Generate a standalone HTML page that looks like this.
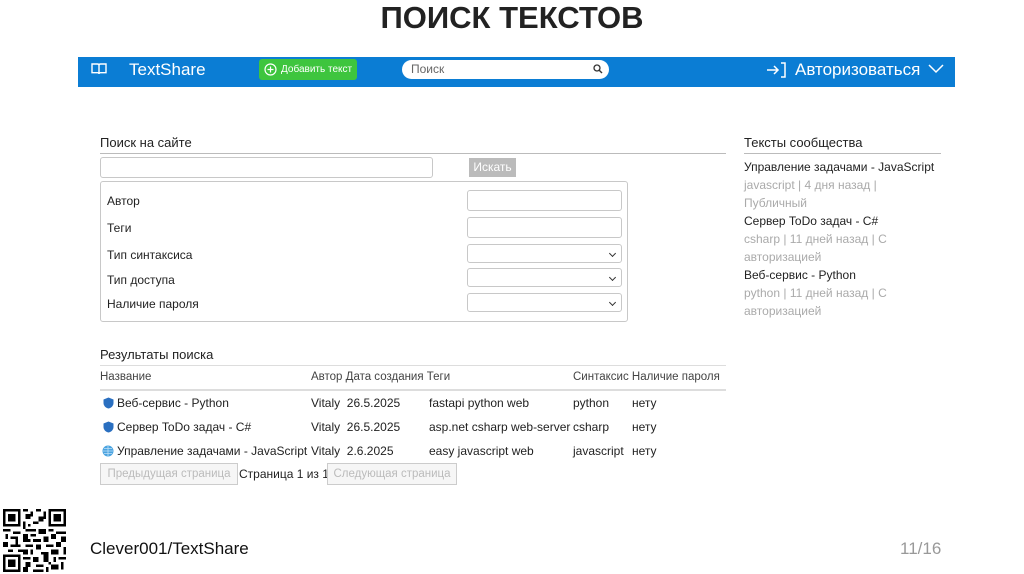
<!DOCTYPE html>
<html><head><meta charset="utf-8"><style>
*{margin:0;padding:0;box-sizing:border-box}
body{width:1024px;height:574px;background:#fff;position:relative;overflow:hidden;font-family:"Liberation Sans","DejaVu Sans",sans-serif;color:#222}
.a{position:absolute;white-space:nowrap}
.t{font-size:12px}
.g{color:#aaa}
.inp{position:absolute;border:1px solid #c8c8c8;border-radius:3px;background:#fff}
.sel:after{content:"";position:absolute;right:6px;top:6px;width:4px;height:4px;border-right:1.5px solid #333;border-bottom:1.5px solid #333;transform:rotate(45deg)}
.btn{position:absolute;border:1px solid #ccc;color:#bbb;font-size:11.5px;background:#f6f6f6;padding:4px 0 0 0;text-align:center;white-space:nowrap;overflow:hidden}
</style></head><body>
<div class="a" style="left:0;width:1024px;top:0;text-align:center;font-size:31px;font-weight:bold;line-height:36px">ПОИСК ТЕКСТОВ</div>

<div class="a" style="left:78px;top:57px;width:877px;height:30px;background:#0b7dd4"></div>
<svg class="a" style="left:91px;top:62px" width="16" height="14" viewBox="0 0 16 14"><path d="M1 2h5.5c1 0 1.5.6 1.5 1.5V12c0-.8-.6-1.3-1.5-1.3H1zM15 2H9.5C8.5 2 8 2.6 8 3.5V12c0-.8.6-1.3 1.5-1.3H15z" fill="none" stroke="#fff" stroke-width="1.4"/></svg>
<div class="a" style="left:129px;top:60px;color:#fff;font-size:17px">TextShare</div>
<div class="a" style="left:259px;top:59px;width:98px;height:21px;background:#3ec53e;border-radius:3px"></div>
<svg class="a" style="left:264px;top:63px" width="13" height="13"><circle cx="6.5" cy="6.5" r="5.5" fill="none" stroke="#fff" stroke-width="1.2"/><path d="M6.5 3.5v6M3.5 6.5h6" stroke="#fff" stroke-width="1.2"/></svg>
<div class="a" style="left:281px;top:64px;color:#fff;font-size:10px">Добавить текст</div>
<div class="a" style="left:402px;top:60px;width:207px;height:19px;background:#fff;border-radius:10px"></div>
<div class="a" style="left:411px;top:62px;color:#666;font-size:12px">Поиск</div>
<svg class="a" style="left:593px;top:64px" width="10" height="10"><circle cx="4" cy="4" r="3" fill="none" stroke="#333" stroke-width="1.3"/><path d="M6.2 6.2L9 9" stroke="#333" stroke-width="1.4"/></svg>
<svg class="a" style="left:766px;top:61px" width="22" height="18"><path d="M1 9h11M8 5l4 4-4 4" fill="none" stroke="#fff" stroke-width="1.5"/><path d="M15 2h4v14h-4" fill="none" stroke="#fff" stroke-width="1.5"/></svg>
<div class="a" style="left:795px;top:60px;color:#fff;font-size:17px">Авторизоваться</div>
<svg class="a" style="left:928px;top:64px" width="16" height="10"><path d="M1 1l7 7 7-7" fill="none" stroke="#fff" stroke-width="1.5"/></svg>

<div class="a" style="left:100px;top:135px;font-size:13px">Поиск на сайте</div>
<div class="a" style="left:100px;top:153px;width:626px;height:1px;background:#bbb"></div>
<div class="inp" style="left:100px;top:157px;width:333px;height:21px"></div>
<div class="a" style="left:469px;top:158px;width:47px;height:19px;background:#bbb;color:#fff;font-size:12px;text-align:center;line-height:19px">Искать</div>
<div class="inp" style="left:100px;top:181px;width:528px;height:141px"></div>
<div class="a t" style="left:107px;top:194px">Автор</div>
<div class="a t" style="left:107px;top:221px">Теги</div>
<div class="a t" style="left:107px;top:248px">Тип синтаксиса</div>
<div class="a t" style="left:107px;top:273px">Тип доступа</div>
<div class="a t" style="left:107px;top:297px">Наличие пароля</div>
<div class="inp" style="left:467px;top:190px;width:155px;height:21px"></div>
<div class="inp" style="left:467px;top:217px;width:155px;height:21px"></div>
<div class="inp sel" style="left:467px;top:244px;width:155px;height:19px"></div>
<div class="inp sel" style="left:467px;top:268px;width:155px;height:19px"></div>
<div class="inp sel" style="left:467px;top:293px;width:155px;height:19px"></div>

<div class="a" style="left:100px;top:347px;font-size:13px">Результаты поиска</div>
<div class="a" style="left:100px;top:365px;width:626px;height:1px;background:#ddd"></div>
<div class="a t" style="left:100px;top:371px;color:#444;font-size:11.5px">Название</div>
<div class="a t" style="left:311px;top:371px;color:#444;font-size:11.5px">Автор Дата создания Теги</div>
<div class="a t" style="left:573px;top:371px;color:#444;font-size:11.5px">Синтаксис Наличие пароля</div>
<div class="a" style="left:100px;top:389px;width:626px;height:2px;background:#ddd"></div>

<svg class="a" style="left:103px;top:397px" width="11" height="12"><path d="M5.5 0.5L10.5 2.5V6c0 3-2.5 5-5 5.5C3 11 .5 9 .5 6V2.5z" fill="#2a6fc0"/></svg>
<svg class="a" style="left:103px;top:421px" width="11" height="12"><path d="M5.5 0.5L10.5 2.5V6c0 3-2.5 5-5 5.5C3 11 .5 9 .5 6V2.5z" fill="#2a6fc0"/></svg>
<svg class="a" style="left:102px;top:445px" width="12" height="12"><circle cx="6" cy="6" r="5.5" fill="#4aa3e0"/><path d="M1 6h10M6 1v10M2 3.5h8M2 8.5h8" stroke="#bfe0f7" stroke-width=".8"/></svg>
<div class="a t" style="left:117px;top:396px">Веб-сервис - Python</div>
<div class="a t" style="left:117px;top:420px">Сервер ToDo задач - C#</div>
<div class="a t" style="left:117px;top:444px">Управление задачами - JavaScript</div>
<div class="a t" style="left:311px;top:396px">Vitaly&nbsp; 26.5.2025</div>
<div class="a t" style="left:311px;top:420px">Vitaly&nbsp; 26.5.2025</div>
<div class="a t" style="left:311px;top:444px">Vitaly&nbsp; 2.6.2025</div>
<div class="a t" style="left:429px;top:396px">fastapi python web</div>
<div class="a t" style="left:429px;top:420px">asp.net csharp web-server</div>
<div class="a t" style="left:429px;top:444px">easy javascript web</div>
<div class="a t" style="left:573px;top:396px">python</div>
<div class="a t" style="left:573px;top:420px">csharp</div>
<div class="a t" style="left:573px;top:444px">javascript</div>
<div class="a t" style="left:632px;top:396px">нету</div>
<div class="a t" style="left:632px;top:420px">нету</div>
<div class="a t" style="left:632px;top:444px">нету</div>
<div class="btn" style="left:100px;top:463px;width:138px;height:22px">Предыдущая страница</div>
<div class="a t" style="left:239px;top:467px">Страница 1 из 1</div>
<div class="btn" style="left:327px;top:463px;width:130px;height:22px">Следующая страница</div>

<div class="a" style="left:744px;top:135px;font-size:13px">Тексты сообщества</div>
<div class="a" style="left:744px;top:153px;width:197px;height:1px;background:#bbb"></div>
<div class="a t" style="left:744px;top:160px">Управление задачами - JavaScript</div>
<div class="a t g" style="left:744px;top:178px">javascript | 4 дня назад |</div>
<div class="a t g" style="left:744px;top:196px">Публичный</div>
<div class="a t" style="left:744px;top:214px">Сервер ToDo задач - C#</div>
<div class="a t g" style="left:744px;top:232px">csharp | 11 дней назад | С</div>
<div class="a t g" style="left:744px;top:250px">авторизацией</div>
<div class="a t" style="left:744px;top:268px">Веб-сервис - Python</div>
<div class="a t g" style="left:744px;top:286px">python | 11 дней назад | С</div>
<div class="a t g" style="left:744px;top:304px">авторизацией</div>

<svg class="a" style="left:3px;top:509px" width="63" height="63" viewBox="0 0 25 25" shape-rendering="crispEdges">
<g fill="#000">
<path d="M0 0h7v7H0zM18 0h7v7h-7zM0 18h7v7H0z"/>
</g>
<g fill="#fff"><path d="M1 1h5v5H1zM19 1h5v5h-5zM1 19h5v5H1z"/></g>
<g fill="#000"><path d="M2 2h3v3H2zM20 2h3v3h-3zM2 20h3v3H2z"/>
<path d="M8 0h2v1H8zM11 1h1v2h-1zM13 0h2v1h-2zM9 2h2v2H9zM14 3h2v2h-2zM8 5h1v3H8zM12 5h2v1h-2zM10 6h1v1h-1zM16 1h1v3h-1zM0 8h3v1H0zM4 9h3v1H4zM1 10h1v2H1zM3 11h3v1H3zM9 8h4v1H9zM14 8h3v2h-3zM18 8h2v1h-2zM21 9h4v1h-4zM19 10h2v2h-2zM23 11h2v2h-2zM8 10h2v3H8zM11 10h2v1h-2zM12 12h3v1h-3zM16 11h2v2h-2zM0 13h2v2H0zM3 14h4v1H3zM5 12h1v2H5zM9 14h3v1H9zM13 14h2v2h-2zM17 14h3v1h-3zM21 13h2v2h-2zM24 15h1v3h-1zM8 16h2v2H8zM11 16h1v2h-1zM15 17h3v1h-3zM19 16h3v2h-3zM8 19h3v1H8zM12 19h2v2h-2zM16 18h2v3h-2zM20 19h1v2h-1zM22 19h3v1h-3zM9 21h2v2H9zM13 22h3v1h-3zM18 21h1v1h-1zM19 22h3v2h-3zM23 21h1v3h-1zM8 23h2v2H8zM12 24h4v1h-4zM17 23h1v2h-1zM10 12h1v1h-1zM6 16h2v1H6zM2 16h2v1H2z"/></g>
</svg>
<div class="a" style="left:90px;top:539px;font-size:17px;color:#111">Clever001/TextShare</div>
<div class="a" style="left:900px;top:539px;font-size:17px;color:#999">11/16</div>
</body></html>
